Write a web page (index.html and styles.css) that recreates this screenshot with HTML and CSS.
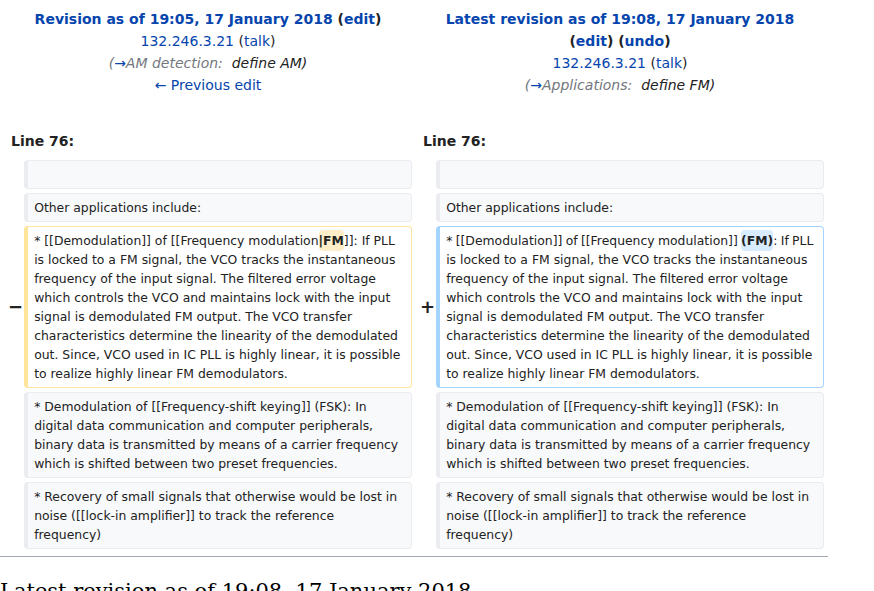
FILE: index.html
```html
<!DOCTYPE html>
<html>
<head>
<meta charset="utf-8">
<link rel="stylesheet" href="styles.css">
</head>
<body>
<div class="page">
<table class="diff">
<colgroup><col class="c-marker"><col class="c-content"><col class="c-marker"><col class="c-content"></colgroup>
<tr class="diff-title">
<td colspan="2" class="diff-otitle">
<div class="t-line"><strong><a href="#">Revision as of 19:05, 17 January 2018</a> <span class="paren">(<a href="#">edit</a>)</span></strong></div>
<div class="t-line"><a href="#">132.246.3.21</a> <span class="plain">(<a href="#">talk</a>)</span></div>
<div class="t-line summary"><span class="gray">(<a href="#">→</a>AM detection:</span>&nbsp; <span class="dark">define AM)</span></div>
<div class="t-line"><a href="#">← Previous edit</a></div>
</td>
<td colspan="2" class="diff-ntitle">
<div class="t-line"><strong><a href="#">Latest revision as of 19:08, 17 January 2018</a> <span class="paren">(<a href="#">edit</a>) (<a href="#">undo</a>)</span></strong></div>
<div class="t-line"><a href="#">132.246.3.21</a> <span class="plain">(<a href="#">talk</a>)</span></div>
<div class="t-line summary"><span class="gray">(<a href="#">→</a>Applications:</span>&nbsp; <span class="dark">define FM)</span></div>
</td>
</tr>
<tr>
<td colspan="2" class="diff-lineno">Line 76:</td>
<td colspan="2" class="diff-lineno">Line 76:</td>
</tr>
<tr>
<td class="diff-marker"></td>
<td class="diff-context"><div><br></div></td>
<td class="diff-marker"></td>
<td class="diff-context"><div><br></div></td>
</tr>
<tr>
<td class="diff-marker"></td>
<td class="diff-context"><div>Other applications include:</div></td>
<td class="diff-marker"></td>
<td class="diff-context"><div>Other applications include:</div></td>
</tr>
<tr>
<td class="diff-marker"><span class="mk">−</span></td>
<td class="diff-deletedline"><div>* [[Demodulation]] of [[Frequency modulation<span class="diffchange">|FM</span>]]: If PLL is locked to a FM signal, the VCO tracks the instantaneous frequency of the input signal. The filtered error voltage which controls the VCO and maintains lock with the input signal is demodulated FM output. The VCO transfer characteristics determine the linearity of the demodulated out. Since, VCO used in IC PLL is highly linear, it is possible to realize highly linear FM demodulators.</div></td>
<td class="diff-marker"><span class="mk">+</span></td>
<td class="diff-addedline"><div><span class="tight">* [[Demodulation]] of [[Frequency modulation]] <span class="diffchange">(FM)</span>: If PLL</span> is locked to a FM signal, the VCO tracks the instantaneous frequency of the input signal. The filtered error voltage which controls the VCO and maintains lock with the input signal is demodulated FM output. The VCO transfer characteristics determine the linearity of the demodulated out. Since, VCO used in IC PLL is highly linear, it is possible to realize highly linear FM demodulators.</div></td>
</tr>
<tr>
<td class="diff-marker"></td>
<td class="diff-context"><div>* Demodulation of [[Frequency-shift keying]] (FSK): In digital data communication and computer peripherals, binary data is transmitted by means of a carrier frequency which is shifted between two preset frequencies.</div></td>
<td class="diff-marker"></td>
<td class="diff-context"><div>* Demodulation of [[Frequency-shift keying]] (FSK): In digital data communication and computer peripherals, binary data is transmitted by means of a carrier frequency which is shifted between two preset frequencies.</div></td>
</tr>
<tr>
<td class="diff-marker"></td>
<td class="diff-context"><div>* Recovery of small signals that otherwise would be lost in noise ([[lock-in amplifier]] to track the reference frequency)</div></td>
<td class="diff-marker"></td>
<td class="diff-context"><div>* Recovery of small signals that otherwise would be lost in noise ([[lock-in amplifier]] to track the reference frequency)</div></td>
</tr>
</table>
<hr class="diff-hr">
<h2 class="rev-heading">Latest revision as of 19:08, 17 January 2018</h2>
</div>
</body>
</html>
```
FILE: styles.css
```css
html, body {
  margin: 0;
  padding: 0;
  background: #ffffff;
}
.page {
  width: 828px;
}
table.diff {
  width: 828px;
  border: none;
  border-spacing: 4px;
  margin: 0;
  table-layout: fixed;
  font-family: "DejaVu Sans", sans-serif;
  font-size: 14px;
  color: #222222;
}
col.c-marker { width: 2%; }
col.c-content { width: 48%; }
td { padding: 0; }
a { color: #0645ad; text-decoration: none; }
.diff-otitle, .diff-ntitle {
  text-align: center;
  vertical-align: top;
  padding-top: 4px;
  padding-bottom: 30px;
}
.t-line {
  line-height: 22px;
}
.t-line strong { font-weight: bold; }
.paren { color: #222222; white-space: nowrap; }
.plain { color: #222222; }
.summary { font-style: italic; }
.gray { color: #72777d; }
.dark { color: #222222; }
.diff-lineno {
  font-weight: bold;
  padding-left: 7px;
  padding-bottom: 4px;
  line-height: 22px;
}
.diff-marker {
  text-align: right;
  font-weight: bold;
  font-size: 18px;
  line-height: 1.2;
  vertical-align: middle;
}
.mk {
  display: inline-block;
  margin-right: -3px;
}
.diff-context, .diff-deletedline, .diff-addedline {
  font-size: 12.4px;
  line-height: 19px;
  vertical-align: top;
  white-space: pre-wrap;
  word-wrap: break-word;
  border-style: solid;
  border-width: 1px 1px 1px 4px;
  border-radius: 4px;
}
.diff-context div, .diff-deletedline div, .diff-addedline div {
  padding: 4px 8px 4px 6px;
}
.tight { word-spacing: -0.6px; }
.diff-context {
  background: #f8f9fa;
  border-color: #eaecf0;
  color: #222222;
}
.diff-deletedline { border-color: #ffe49c; }
.diff-addedline { border-color: #a3d3ff; }
.diffchange {
  font-weight: bold;
  border-radius: 4px;
  padding: 3px 0;
}
.diff-deletedline .diffchange { background: #feeec8; }
.diff-addedline .diffchange { background: #d8ecff; }
.diff-hr {
  margin: 3px 0 0 0;
  border: none;
  border-top: 1px solid #a2a9b1;
  height: 0;
}
.rev-heading {
  font-family: "DejaVu Serif", serif;
  font-weight: normal;
  font-size: 21px;
  margin: 22px 0 0 0;
  color: #000000;
}
```
